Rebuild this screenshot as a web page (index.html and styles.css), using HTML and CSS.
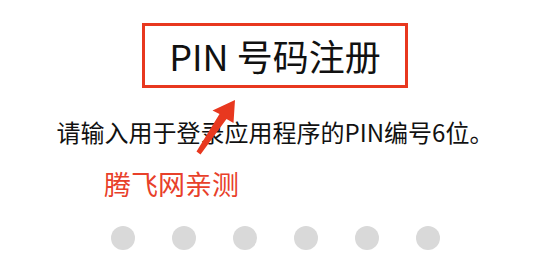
FILE: index.html
```html
<!DOCTYPE html>
<html lang="zh-CN">
<head>
<meta charset="utf-8">
<link rel="stylesheet" href="styles.css">
</head>
<body>
<main class="page">
  <h1 class="title">PIN 号码注册</h1>
  <p class="desc">请输入用于登录应用程序的PIN编号6位。</p>
  <p class="mark">腾飞网亲测</p>
  <div class="dots">
    <span class="dot"></span><span class="dot"></span><span class="dot"></span>
    <span class="dot"></span><span class="dot"></span><span class="dot"></span>
  </div>
  <svg class="arrow" width="60" height="70" viewBox="0 0 60 70">
    <polygon points="53,4 51.5,27 44.5,23 18.5,58.5 14.5,55.5 37.5,18 30.5,14.5" fill="#e8381f"/>
  </svg>
</main>
</body>
</html>
```

FILE: styles.css
```css
html, body {
  margin: 0;
  padding: 0;
  background: #ffffff;
}
.page {
  position: relative;
  width: 550px;
  height: 275px;
  overflow: hidden;
  display: flex;
  flex-direction: column;
  align-items: center;
  font-family: "Noto Sans CJK SC", "Noto Sans", sans-serif;
  color: #111111;
}
.title {
  margin: 23px 0 0;
  box-sizing: border-box;
  width: 266px;
  height: 65px;
  border: 3px solid #e8381f;
  display: flex;
  align-items: center;
  justify-content: center;
  font-size: 36px;
  font-weight: 400;
  line-height: 1;
  padding-bottom: 2px;
}
.desc {
  margin: 28px 0 0;
  font-size: 24px;
  line-height: 32px;
}
.mark {
  align-self: flex-start;
  margin: 18px 0 0 104px;
  font-size: 27px;
  line-height: 36px;
  color: #e8402a;
}
.dots {
  margin-top: 24px;
  display: flex;
  gap: 37px;
}
.dot {
  width: 24px;
  height: 24px;
  border-radius: 50%;
  background: #d9d9d9;
}
.arrow {
  position: absolute;
  left: 182px;
  top: 96px;
}
```
